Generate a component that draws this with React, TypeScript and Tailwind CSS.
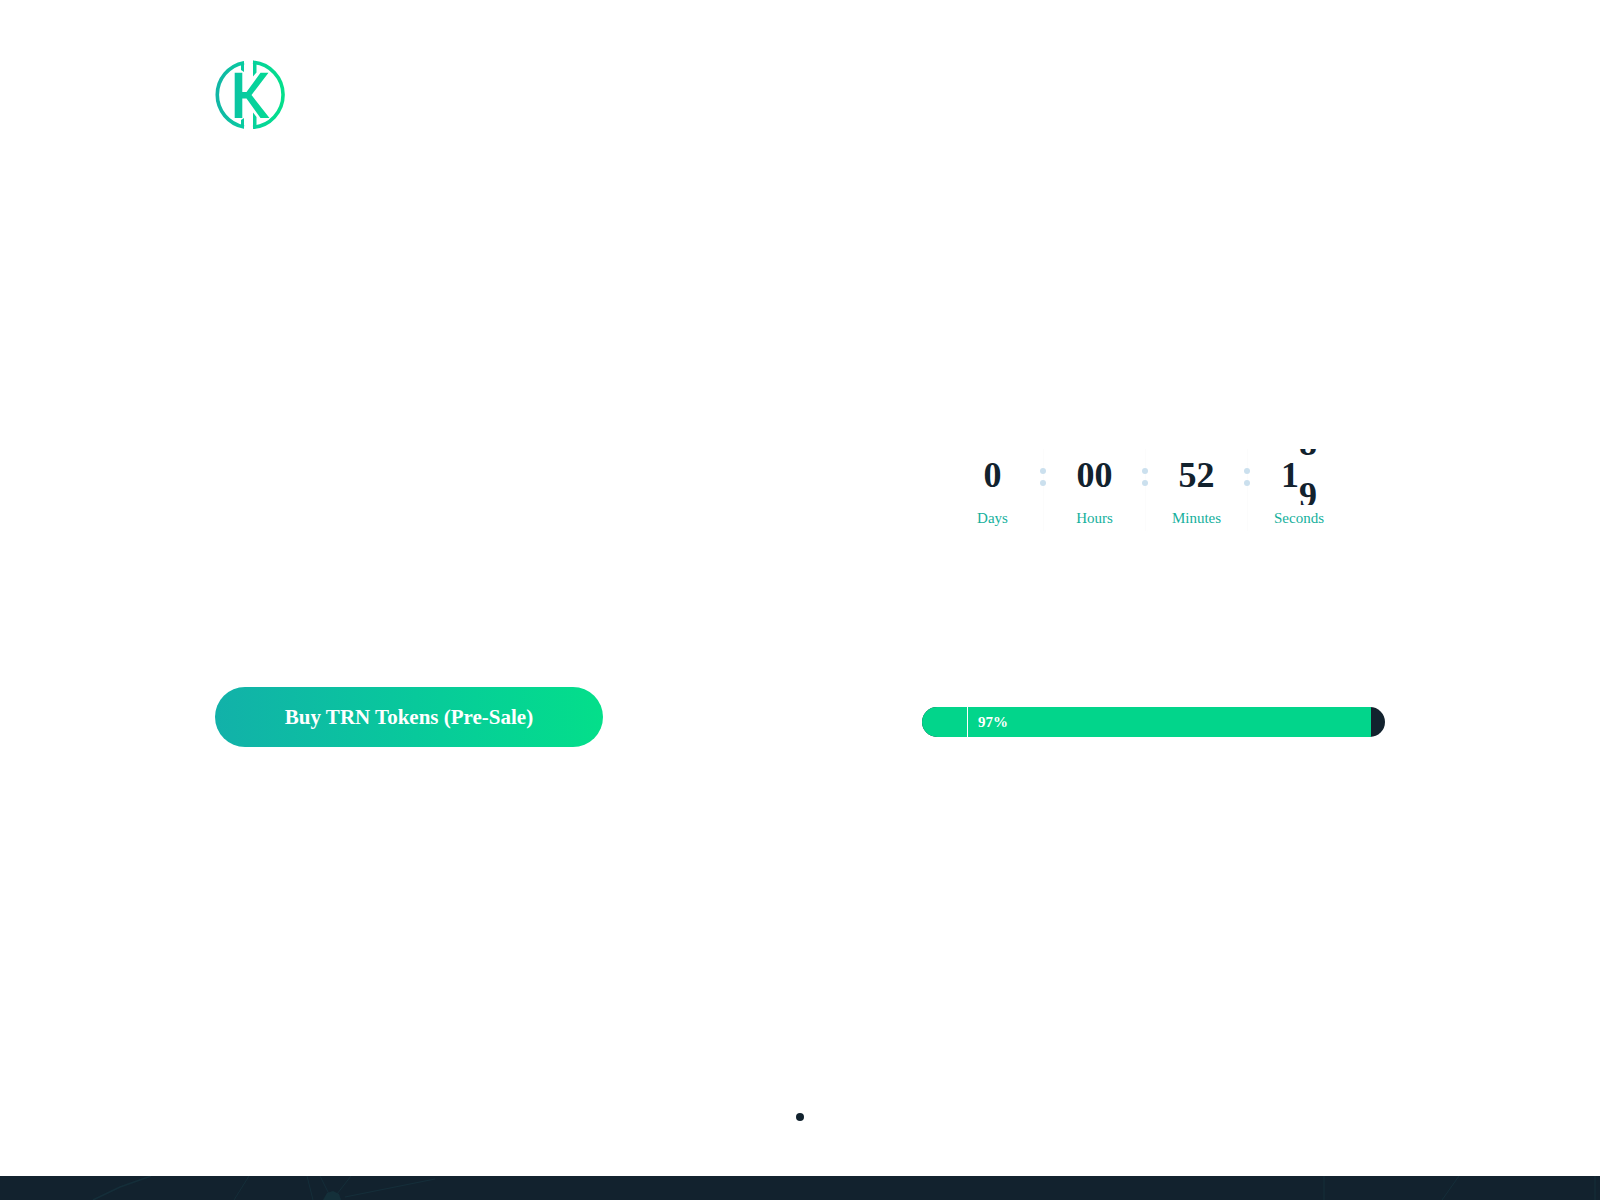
import React from "react";

const units = [
  { label: "Days", value: "0" },
  { label: "Hours", value: "00" },
  { label: "Minutes", value: "52" },
];

const Logo = () => (
  <svg className="w-[70px] h-[70px]" viewBox="0 0 70 70" fill="none" aria-hidden="true">
    <defs>
      <linearGradient id="logo" gradientUnits="userSpaceOnUse" x1="0" y1="0" x2="70" y2="0">
        <stop offset="0" stopColor="#12b5a6" />
        <stop offset="0.5" stopColor="#06d09e" />
        <stop offset="1" stopColor="#04e08a" />
      </linearGradient>
    </defs>
    <path d="M29 2.7A32.7 32.7 0 0 0 29 67" stroke="url(#logo)" strokeWidth="3.6" />
    <path d="M38 2.3A32.6 32.6 0 0 1 38 67.3" stroke="url(#logo)" strokeWidth="3.6" />
    <path
      d="M29 1V12L26 10V3ZM29 68.8V58L26 60V67ZM38 0.5L41.5 2V12.5L38 16.5ZM38 69V52.5L41.5 57V68Z"
      fill="url(#logo)"
    />
    <path
      d="M19.7 12.7H27.3V32H31.5L45.5 12.7H53.5L36.5 35L54.5 58H45.5L31.5 38.5H27.3V58H19.7Z"
      fill="url(#logo)"
    />
  </svg>
);

const Colon = () => (
  <span className="absolute -right-[3px] top-[19px] flex flex-col gap-1.5" aria-hidden="true">
    <span className="size-1.5 rounded-full bg-[#cbe0ee]" />
    <span className="size-1.5 rounded-full bg-[#cbe0ee]" />
  </span>
);

const Countdown = () => (
  <div className="flex pl-5 text-center">
    {units.map((unit) => (
      <div key={unit.label} className="relative w-[102px] h-[82px] border-r border-[#fcfcfc]">
        <div className="h-14 text-4xl/[52px] font-bold">{unit.value}</div>
        <div className="text-[15px]/[26px] text-[#15b09c]">{unit.label}</div>
        <Colon />
      </div>
    ))}
    <div className="w-[102px] h-[82px]">
      <div className="flex justify-center h-14 overflow-hidden text-4xl/[52px] font-bold">
        <span>1</span>
        {/* the last digit is rolling over */}
        <span className="flex flex-col -mt-8">
          <span className="h-[54px]">8</span>
          <span>9</span>
        </span>
      </div>
      <div className="text-[15px]/[26px] text-[#15b09c]">Seconds</div>
    </div>
  </div>
);

const Progress = () => (
  <div className="h-[30px] mt-44 rounded-full overflow-hidden bg-[#12222e]">
    <div className="flex h-full w-[97%] bg-[#02d58b]">
      <div className="w-[46px] border-r border-white" />
      <span className="pl-2.5 text-[15px]/[30px] font-bold text-white">97%</span>
    </div>
  </div>
);

const Network = () => (
  <svg className="w-[1600px] h-6 max-w-none" viewBox="0 0 1600 24" fill="none" aria-hidden="true">
    <g stroke="#19404a" strokeOpacity="0.4">
      <path d="M93 24L120 11L151 0" strokeWidth="1.5" />
      <path d="M234 24L249 0M307 0L313 24M320 0L329 18M351 0L337 18M345 21L435 3" />
      <path d="M1324 0V24M1442 24L1459 0M1595 0V24" />
    </g>
    <path d="M323 24L327 17L333 15L339 18L341 24Z" fill="#14303a" />
  </svg>
);

const App = () => {
  return (
    <div className="flex flex-col min-h-screen bg-white text-[#12222e] font-['Liberation_Serif',serif]">
      <main className="w-full max-w-[1170px] mx-auto">
        <header className="pt-[60px]">
          <a href="#" aria-label="Home" className="block w-[70px]">
            <Logo />
          </a>
        </header>

        <section className="flex justify-between mt-[319px]">
          <div className="w-[388px] pt-[238px]">
            <button className="w-full h-[60px] pt-0.5 rounded-full bg-linear-to-r from-[#12b1a9] to-[#04df8a] text-[21px] font-bold text-white cursor-pointer">
              Buy TRN Tokens (Pre-Sale)
            </button>
          </div>
          <div className="w-[463px]">
            <Countdown />
            <Progress />
          </div>
        </section>

        <div className="flex justify-center pt-[366px] pb-[55px]">
          <button aria-label="Slide 1" className="size-2 rounded-full bg-[#12222e] cursor-pointer" />
        </div>
      </main>

      <footer className="grow overflow-hidden bg-[#12222e] border-b border-[#151b29]">
        <Network />
      </footer>
    </div>
  );
};

export default App;
